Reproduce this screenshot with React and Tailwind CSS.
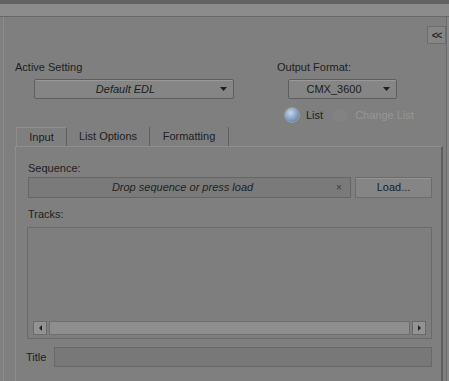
const Arrow = () => (
  <svg width="7" height="4" viewBox="0 0 7 4" className="shrink-0">
    <path d="M0 0 H7 L3.5 4 Z" fill="#1e1e1e" />
  </svg>
);

const Dropdown = ({ label, italic, className = '' }) => (
  <div className={`flex items-center h-[20px] border border-[#5e5e5e] rounded-[2px] bg-[#858585] shadow-[inset_0_1px_0_#999] ${className}`}>
    <span className={`flex-1 text-center text-[11px] text-[#1c1c1c] ${italic ? 'italic' : ''}`}>{label}</span>
    <span className="pr-[6px] pl-[4px]"><Arrow /></span>
  </div>
);

const Tab = ({ label, active, width }) => (
  <div className={`h-[19px] flex items-center justify-center text-[11px] text-[#1e1e1e] border-r border-r-[#5f5f5f] ${width} ${active ? 'border-l border-l-[#8f8f8f] border-t border-t-[#8f8f8f]' : ''}`}>
    {label}
  </div>
);

const ScrollButton = ({ side }) => (
  <div className="w-[14px] h-[14px] flex items-center justify-center border border-[#6a6a6a] bg-[#939393]">
    <div className={`w-0 h-0 border-y-[3px] border-y-transparent ${side === 'left' ? 'border-r-[3px] border-r-[#222]' : 'border-l-[3px] border-l-[#222]'}`} />
  </div>
);

export default function App() {
  return (
    <div className="w-[449px] h-[381px] overflow-hidden bg-[#7f7f7f] flex flex-col font-['Liberation_Sans',Arial,sans-serif] text-[#1e1e1e]">
      {/* title strip */}
      <div className="h-[4px] bg-[#626262]" />
      <div className="h-[13px] bg-[#8c8c8c] border-b border-[#686868] shrink-0" />

      <div className="flex-1 flex min-h-0">
        <div className="w-[3px] shrink-0" />
        <div className="flex-1 flex flex-col border-l border-l-[#8b8b8b] border-r border-r-[#6b6b6b] min-h-0">
          {/* collapse button */}
          <div className="flex justify-end pt-[9px]">
            <div className="w-[19px] h-[18px] border border-[#6c6c6c] bg-[#868686] flex items-center justify-center text-[10px] font-bold tracking-[-1px] text-[#2a2a2a]">
              &lt;&lt;
            </div>
          </div>

          {/* settings row */}
          <div className="flex mt-[16px]">
            <div className="w-[273px] pl-[11px]">
              <div className="text-[11px] leading-[14px]">Active Setting</div>
              <Dropdown label="Default EDL" italic className="ml-[19px] mt-[5px] w-[200px]" />
            </div>
            <div className="flex flex-col">
              <div className="text-[11px] leading-[14px]">Output Format:</div>
              <Dropdown label="CMX_3600" className="ml-[11px] mt-[5px] w-[109px]" />
              <div className="flex items-center mt-[8px] ml-[7px] h-[16px]">
                <div className="w-[16px] h-[16px] rounded-full border border-[#9a9a9a] bg-[radial-gradient(circle_at_40%_35%,#c4d8ea,#6b8fb5_70%)]" />
                <span className="ml-[6px] text-[11px]">List</span>
                <div className="ml-[11px] w-[13px] h-[13px] rounded-full border border-[#878787] bg-[#828282]" />
                <span className="ml-[8px] text-[11px] text-[#969696]">Change List</span>
              </div>
            </div>
          </div>

          {/* tabs */}
          <div className="flex mt-[4px] ml-[12px]">
            <Tab label="Input" active width="w-[51px]" />
            <Tab label="List Options" width="w-[83px]" />
            <Tab label="Formatting" width="w-[79px]" />
          </div>

          {/* tab panel */}
          <div className="flex-1 ml-[11px] mr-[3px] border-t border-t-[#8e8e8e] border-l border-l-[#8e8e8e] border-r-2 border-r-[#5f5f5f] pl-[12px] pr-[9px] pt-[14px]">
            <div className="text-[11px] leading-[14px]">Sequence:</div>
            <div className="flex mt-[2px] h-[21px]">
              <div className="flex-1 flex items-center border border-[#666] bg-[#7a7a7a]">
                <span className="flex-1 text-center italic text-[11px] text-[#222]">Drop sequence or press load</span>
                <span className="w-[12px] text-[10px] text-[#3a3a3a] mr-[2px]">×</span>
              </div>
              <div className="w-[77px] ml-[4px] flex items-center justify-center border border-[#6c6c6c] bg-[#858585] shadow-[inset_0_1px_0_#959595] text-[11px]">
                Load...
              </div>
            </div>

            <div className="text-[11px] leading-[14px] mt-[9px]">Tracks:</div>
            <div className="mt-[6px] h-[112px] border border-[#6a6a6a] bg-[#7e7e7e] flex flex-col justify-end -ml-px">
              <div className="flex items-center gap-[2px] px-[5px] pb-[2px] h-[18px]">
                <ScrollButton side="left" />
                <div className="flex-1 h-[14px] border border-[#6f6f6f] bg-[#8e8e8e]" />
                <ScrollButton side="right" />
              </div>
            </div>

            <div className="flex items-center mt-[8px] h-[20px] -ml-[2px]">
              <span className="text-[11px] w-[28px]">Title</span>
              <div className="flex-1 h-[20px] border border-[#686868] bg-[#787878]" />
            </div>
          </div>
        </div>
        <div className="w-[2px] shrink-0 bg-[#878787]" />
      </div>
    </div>
  );
}
